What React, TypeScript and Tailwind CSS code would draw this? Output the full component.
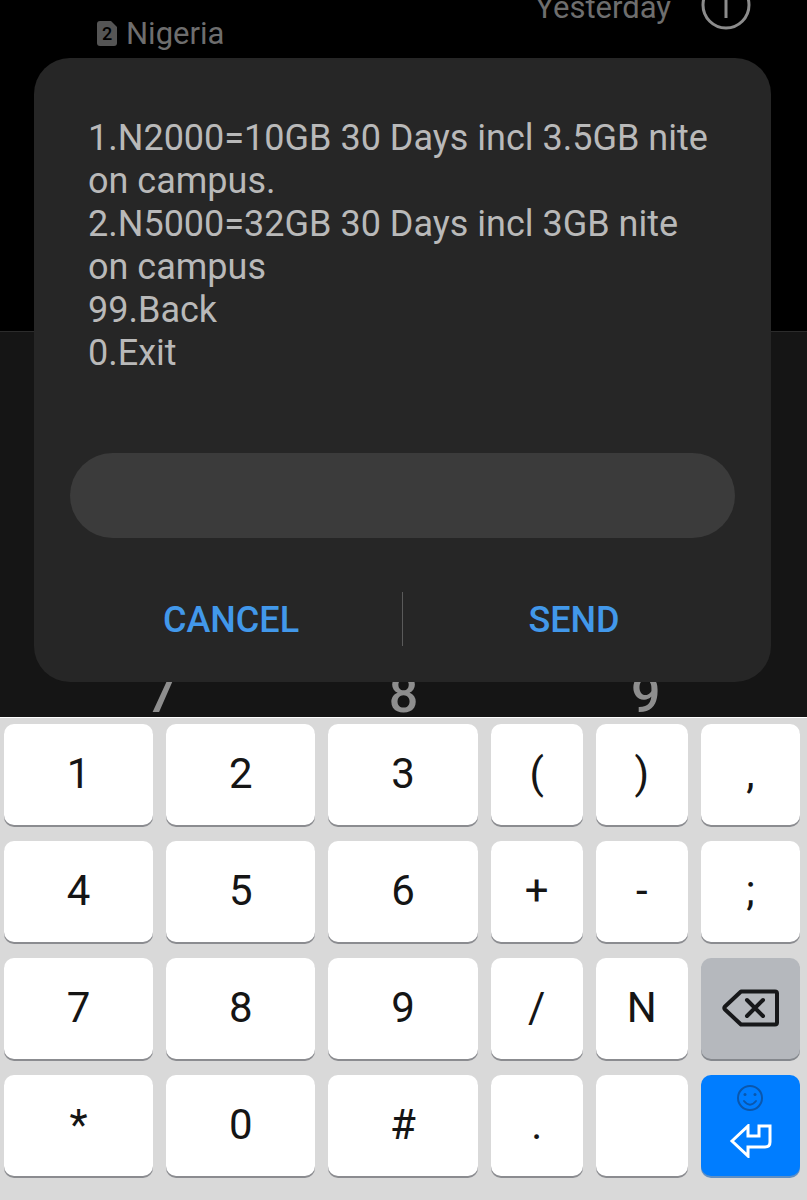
import { useState } from 'react'
import type { ReactNode } from 'react'

type KeyVariant = 'char' | 'delete' | 'enter'

interface KeyDef {
  label: string
  value?: string
  variant?: KeyVariant
  icon?: ReactNode
}

const MESSAGE = [
  '1.N2000=10GB 30 Days incl 3.5GB nite on campus.',
  '2.N5000=32GB 30 Days incl 3GB nite on campus',
  '99.Back',
  '0.Exit',
]

function BackspaceIcon() {
  return (
    <svg width="58" height="40" viewBox="0 0 58 40" fill="none" stroke="#17181a" strokeWidth="4" strokeLinecap="round" strokeLinejoin="round">
      <path d="M20 3.500H54Q56 3.500 56 5.500V34.500Q56 36.500 54 36.500H20L4 21.500Q2.500 20 4 18.500Z" />
      <path d="M26 12L42 28M42 12L26 28" />
    </svg>
  )
}

function EnterIcon() {
  return (
    <div className="flex flex-col items-center gap-3">
      <svg width="28" height="28" viewBox="0 0 28 28" fill="none" stroke="#0a57ad" strokeWidth="2" strokeLinecap="round">
        <circle cx="14" cy="14" r="12" />
        <path d="M8 17Q14 24.500 20 17" />
        <circle cx="9" cy="10.500" r="1.500" fill="#0a57ad" stroke="none" />
        <circle cx="19" cy="10.500" r="1.500" fill="#0a57ad" stroke="none" />
      </svg>
      <svg width="44" height="34" viewBox="0 0 44 34" fill="none" stroke="#fff" strokeWidth="3" strokeLinejoin="miter">
        <path d="M4 17L20 2V12H31V2H42V18Q42 23 37 23H20V32Z" />
      </svg>
    </div>
  )
}

function SimIcon() {
  return (
    <svg width="20" height="26" viewBox="0 0 20 26" aria-hidden="true">
      <path d="M3 0H14L20 6V22Q20 25 17 25H3Q0 25 0 22V3Q0 0 3 0Z" fill="#555" />
      <text x="10" y="19" textAnchor="middle" fontFamily="Roboto, sans-serif" fontSize="18" fontWeight="500" fill="#000">2</text>
    </svg>
  )
}

const KEYS: KeyDef[] = [
  { label: '1' }, { label: '2' }, { label: '3' }, { label: '(' }, { label: ')' }, { label: ',' },
  { label: '4' }, { label: '5' }, { label: '6' }, { label: '+' }, { label: '-' }, { label: ';' },
  { label: '7' }, { label: '8' }, { label: '9' }, { label: '/' }, { label: 'N' },
  { label: 'Backspace', variant: 'delete', icon: <BackspaceIcon /> },
  { label: '*' }, { label: '0' }, { label: '#' }, { label: '.' }, { label: 'Space', value: ' ' },
  { label: 'Enter', variant: 'enter', icon: <EnterIcon /> },
]

const KEY_STYLES: Record<KeyVariant, string> = {
  char: 'bg-white pb-0.5 shadow-[0_2px_0_#8b8c90]',
  delete: 'bg-[#b5b8bd] pb-0.5 shadow-[0_2px_0_#85888d]',
  enter: 'bg-[#007dff] pb-[10px] shadow-[0_2px_0_#5f8fc4]',
}

// Call log and dialer that show around the dialog
function Backdrop() {
  return (
    <div className="absolute inset-0 flex flex-col overflow-hidden font-['Roboto',sans-serif]">
      <div className="flex h-[332px] items-start justify-between border-b border-[#2b2b2b] bg-black pr-14 pl-[97px]">
        <div className="flex items-center gap-[9px] pt-[14px] text-[31px] leading-10 text-[#6e6e6e]">
          <SimIcon />
          <span>Nigeria</span>
        </div>
        <div className="flex items-start gap-7">
          <span className="text-[31px] leading-4 text-[#6e6e6e]">Yesterday</span>
          <svg width="52" height="31" viewBox="0 0 52 31" fill="none" stroke="#8c8c8c" strokeWidth="3">
            <circle cx="27" cy="5" r="23" />
            <path d="M27 0V18" />
          </svg>
        </div>
      </div>
      <div className="grid flex-1 grid-cols-3 items-end bg-[#151515] px-10 text-center text-[52px] leading-[44px] font-medium text-[#8e8e8e]">
        <span>7</span>
        <span>8</span>
        <span>9</span>
      </div>
    </div>
  )
}

export default function App() {
  const [reply, setReply] = useState('')

  const press = (key: KeyDef) => {
    if (key.variant === 'delete') setReply(r => r.slice(0, -1))
    else if (key.variant === 'enter') setReply('')
    else setReply(r => r + (key.value ?? key.label))
  }

  return (
    <div className="flex min-h-screen flex-col bg-[#d9d9d9]">
      <div className="relative bg-[#151515] pt-[58px] pr-9 pb-[35px] pl-[34px]">
        <Backdrop />

        {/* USSD dialog */}
        <form
          role="dialog"
          aria-label="USSD message"
          onSubmit={e => e.preventDefault()}
          className="relative rounded-[36px] bg-[#262626] px-9 pt-[59px] pb-9 font-['Roboto',sans-serif]"
        >
          <div className="px-[18px] text-[36px] leading-[43px] text-[#b9b9b9]">
            {MESSAGE.map(line => (
              <p key={line}>{line}</p>
            ))}
          </div>
          <input
            type="text"
            aria-label="Reply"
            value={reply}
            onChange={e => setReply(e.target.value)}
            className="mt-[78px] block h-[85px] w-full rounded-full bg-[#3b3b3b] px-9 text-[36px] text-[#b9b9b9] outline-none"
          />
          <div className="mt-[54px] flex h-[54px] items-stretch text-[36px] leading-10 font-medium text-[#4298ea]">
            <button type="button" onClick={() => setReply('')} className="flex-1 pt-0.5 pr-[10px]">CANCEL</button>
            <div className="w-px bg-[#5a5a5a]" />
            <button type="submit" className="flex-1 pt-0.5 pl-[10px]">SEND</button>
          </div>
        </form>
      </div>

      {/* Keyboard */}
      <div className="grid flex-1 auto-rows-[101px] grid-cols-[149fr_149fr_149fr_92fr_92fr_99fr] content-start gap-x-[13px] gap-y-4 border-t border-white bg-[#d9d9d9] pt-[6px] pr-[7px] pb-6 pl-1">
        {KEYS.map(key => (
          <button
            key={key.label}
            type="button"
            aria-label={key.label}
            onClick={() => press(key)}
            className={`flex items-center justify-center rounded-[10px] font-['Roboto',sans-serif] text-[42px] leading-none text-[#151515] ${KEY_STYLES[key.variant ?? 'char']}`}
          >
            {key.icon ?? key.value ?? key.label}
          </button>
        ))}
      </div>
    </div>
  )
}
